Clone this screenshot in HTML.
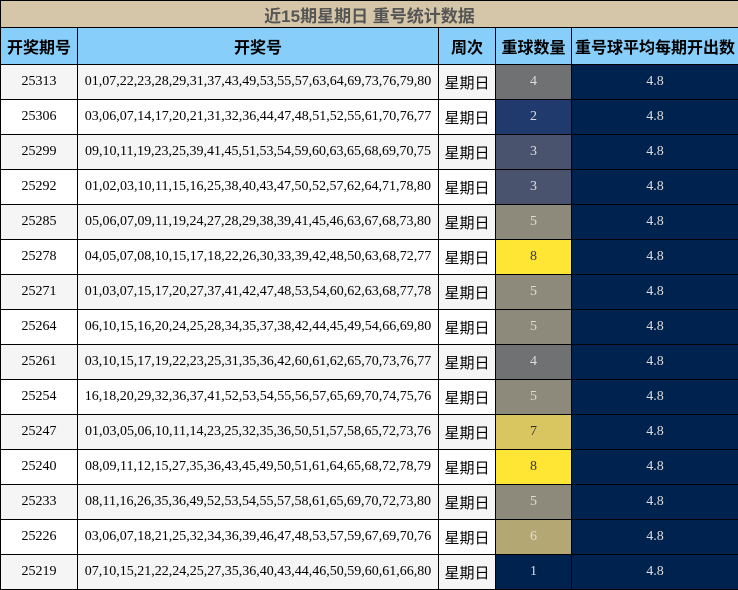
<!DOCTYPE html><html><head><meta charset="utf-8"><style>
body{margin:0;width:738px;height:590px;overflow:hidden;background:#fff}
table{border-collapse:collapse;table-layout:fixed;width:738px;position:absolute;left:0;top:0}
td,th{border:1px solid #000;padding:0;text-align:center;overflow:hidden;white-space:nowrap}
.t{height:26px;background:#d6c6a9;color:#555;font:bold 17px "Liberation Sans","Noto Sans CJK SC",sans-serif}
th{height:36px;background:#87cefa;color:#000;font:bold 16px "Liberation Sans","Noto Sans CJK SC",sans-serif}
td{height:34px;font:14px "Liberation Serif","Noto Sans CJK SC",serif;color:#000}
tr.r:nth-child(odd) td{background:#f5f5f5}
tr.r td.w{font:15px "Liberation Sans","Noto Sans CJK SC",sans-serif}
td.c{color:#ddd}
tr.r td.a{background:#00224e;color:#ddd}
</style></head><body>
<table>
<col style="width:77px"><col style="width:361px"><col style="width:57px"><col style="width:76px"><col style="width:167px">
<tr><td colspan="5" class="t">近15期星期日 重号统计数据</td></tr>
<tr><th>开奖期号</th><th>开奖号</th><th>周次</th><th>重球数量</th><th>重号球平均每期开出数</th></tr>
<tr class="r"><td>25313</td><td>01,07,22,23,28,29,31,37,43,49,53,55,57,63,64,69,73,76,79,80</td><td class="w">星期日</td><td class="c" style="background:#707173">4</td><td class="a">4.8</td></tr>
<tr class="r"><td>25306</td><td>03,06,07,14,17,20,21,31,32,36,44,47,48,51,52,55,61,70,76,77</td><td class="w">星期日</td><td class="c" style="background:#213a6d">2</td><td class="a">4.8</td></tr>
<tr class="r"><td>25299</td><td>09,10,11,19,23,25,39,41,45,51,53,54,59,60,63,65,68,69,70,75</td><td class="w">星期日</td><td class="c" style="background:#4a536e">3</td><td class="a">4.8</td></tr>
<tr class="r"><td>25292</td><td>01,02,03,10,11,15,16,25,38,40,43,47,50,52,57,62,64,71,78,80</td><td class="w">星期日</td><td class="c" style="background:#4a536e">3</td><td class="a">4.8</td></tr>
<tr class="r"><td>25285</td><td>05,06,07,09,11,19,24,27,28,29,38,39,41,45,46,63,67,68,73,80</td><td class="w">星期日</td><td class="c" style="background:#8e8a7b">5</td><td class="a">4.8</td></tr>
<tr class="r"><td>25278</td><td>04,05,07,08,10,15,17,18,22,26,30,33,39,42,48,50,63,68,72,77</td><td class="w">星期日</td><td style="background:#ffe635;color:#333">8</td><td class="a">4.8</td></tr>
<tr class="r"><td>25271</td><td>01,03,07,15,17,20,27,37,41,42,47,48,53,54,60,62,63,68,77,78</td><td class="w">星期日</td><td class="c" style="background:#8e8a7b">5</td><td class="a">4.8</td></tr>
<tr class="r"><td>25264</td><td>06,10,15,16,20,24,25,28,34,35,37,38,42,44,45,49,54,66,69,80</td><td class="w">星期日</td><td class="c" style="background:#8e8a7b">5</td><td class="a">4.8</td></tr>
<tr class="r"><td>25261</td><td>03,10,15,17,19,22,23,25,31,35,36,42,60,61,62,65,70,73,76,77</td><td class="w">星期日</td><td class="c" style="background:#707173">4</td><td class="a">4.8</td></tr>
<tr class="r"><td>25254</td><td>16,18,20,29,32,36,37,41,52,53,54,55,56,57,65,69,70,74,75,76</td><td class="w">星期日</td><td class="c" style="background:#8e8a7b">5</td><td class="a">4.8</td></tr>
<tr class="r"><td>25247</td><td>01,03,05,06,10,11,14,23,25,32,35,36,50,51,57,58,65,72,73,76</td><td class="w">星期日</td><td style="background:#d9c660;color:#333">7</td><td class="a">4.8</td></tr>
<tr class="r"><td>25240</td><td>08,09,11,12,15,27,35,36,43,45,49,50,51,61,64,65,68,72,78,79</td><td class="w">星期日</td><td style="background:#ffe635;color:#333">8</td><td class="a">4.8</td></tr>
<tr class="r"><td>25233</td><td>08,11,16,26,35,36,49,52,53,54,55,57,58,61,65,69,70,72,73,80</td><td class="w">星期日</td><td class="c" style="background:#8e8a7b">5</td><td class="a">4.8</td></tr>
<tr class="r"><td>25226</td><td>03,06,07,18,21,25,32,34,36,39,46,47,48,53,57,59,67,69,70,76</td><td class="w">星期日</td><td class="c" style="background:#b3a873">6</td><td class="a">4.8</td></tr>
<tr class="r"><td>25219</td><td>07,10,15,21,22,24,25,27,35,36,40,43,44,46,50,59,60,61,66,80</td><td class="w">星期日</td><td class="c" style="background:#00224e">1</td><td class="a">4.8</td></tr>
</table></body></html>
